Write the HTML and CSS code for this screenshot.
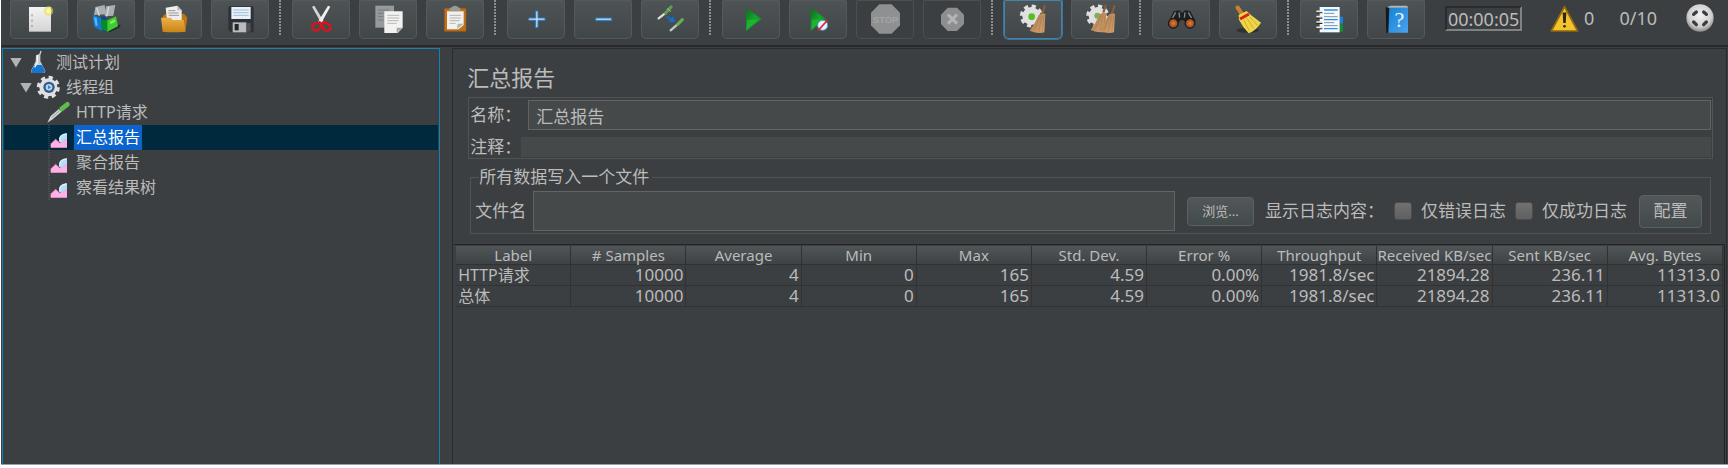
FILE: index.html
```html
<!DOCTYPE html>
<html lang="zh-CN">
<head>
<meta charset="utf-8">
<title>汇总报告</title>
<link rel="stylesheet" href="styles.css">
</head>
<body>
<svg class="defs" aria-hidden="true">
  <defs>
    <linearGradient id="paper" x1="0" y1="0" x2="0" y2="1"><stop offset="0" stop-color="#f4f4f4"/><stop offset="1" stop-color="#d4d4d4"/></linearGradient>
    <linearGradient id="folder" x1="0" y1="0" x2="0" y2="1"><stop offset="0" stop-color="#eeb04a"/><stop offset="1" stop-color="#c98416"/></linearGradient>
    <linearGradient id="blue" x1="0" y1="0" x2="1" y2="1"><stop offset="0" stop-color="#1583d8"/><stop offset="1" stop-color="#4aa3ec"/></linearGradient>
    <linearGradient id="green" x1="0" y1="0" x2="1" y2="1"><stop offset="0" stop-color="#0d6a1c"/><stop offset=".5" stop-color="#15a52b"/><stop offset="1" stop-color="#0b7a1c"/></linearGradient>
    <linearGradient id="wood" x1="0" y1="0" x2="1" y2="1"><stop offset="0" stop-color="#a97a4e"/><stop offset="1" stop-color="#d8a470"/></linearGradient>
    <radialGradient id="ball" cx=".5" cy=".4" r=".6"><stop offset="0" stop-color="#f2f2f2"/><stop offset=".7" stop-color="#cfcfcf"/><stop offset="1" stop-color="#8a8a8a"/></radialGradient>
    <radialGradient id="lens"><stop offset="0" stop-color="#d9814a"/><stop offset=".7" stop-color="#a4501f"/><stop offset="1" stop-color="#2a1a12"/></radialGradient>
    <g id="gear">
      <circle r="27" fill="#e0e0e0"/>
      <circle r="29" fill="none" stroke="#e0e0e0" stroke-width="11" stroke-dasharray="12.4 10.38"/>
    </g>
    <g id="broom">
      <path d="M0-44 6-42-2-18-8-20Z" fill="#8a5d38"/>
      <path d="M-16-14Q-6-22 4-17L1 38Q-18 44-43 33-27 12-16-14Z" fill="url(#wood)"/>
      <path d="M-12-10-30 32M-6-10-16 36M0-10-6 38" stroke="#8a6040" stroke-width="1" fill="none"/>
    </g>
    <symbol id="chart" viewBox="138 250 72 75">
      <path d="M147 250v75" stroke="#77797a" stroke-width="2" stroke-dasharray="3 3"/>
      <path d="M152 306 167 292 180 304 201 291V318H152Z" fill="#ffb0e4"/>
      <path d="M152 306 167 292 180 304 198 293" fill="none" stroke="#a83c78" stroke-width="2"/>
      <path d="M177 300Q172 278 201 274V292L184 304Z" fill="#b8dcf8"/>
      <path d="M180 297Q176 281 198 277" fill="none" stroke="#e8f6ff" stroke-width="3"/>
    </symbol>
  </defs>
</svg>

<div class="app">
  <header class="toolbar">
    <button class="tool" aria-label="新建"><svg viewBox="30 0 174 114">
      <path d="M87 18H153V92H87Z" fill="url(#paper)"/><path d="M96 40v6M96 56v6M96 72v6" stroke="#888" stroke-width="3"/>
      <circle cx="146" cy="30" r="14" fill="#e8d84a" opacity=".6"/><circle cx="146" cy="30" r="8" fill="#fff6a0"/></svg></button>
    <button class="tool" aria-label="模板"><svg viewBox="231 0 174 114">
      <path d="M322 84 362 70 358 80 328 94Z" fill="#252829"/>
      <path d="M286 18 314 12 318 40 282 42ZM318 16 346 12 340 44 314 46Z" fill="#a9b0b3"/><path d="M290 20 298 44M326 18 320 46" stroke="#d8dcde" stroke-width="4"/>
      <path d="M277 41 303 50 308 91 283 79Z" fill="#1478d0"/><path d="M303 50 314 44 320 58 316 92 308 91Z" fill="#0a4a94"/>
      <path d="M282 48 290 51 293 76 286 73Z" fill="#58b8f8"/>
      <path d="M303 55 322 58V92L305 84Z" fill="#0a8a24"/><path d="M322 58 348 46 354 76 322 92Z" fill="#3ccc30"/><path d="M330 62 344 55 346 62 331 70Z" fill="#82ee60"/></svg></button>
    <button class="tool" aria-label="打开"><svg viewBox="432 0 174 114">
      <path d="M488 46 496 38H552L562 50 556 90H492Z" fill="#b87714"/>
      <path d="M497 20 532 14 545 28V58H501Z" fill="#eeeeee"/><path d="M532 14V28H545Z" fill="#b8b8b8"/><path d="M505 29H526M505 36H536M506 43H537" stroke="#999" stroke-width="3"/>
      <path d="M483 50H512L518 57H551L557 92Q520 96 488 92Z" fill="url(#folder)"/></svg></button>
    <button class="tool" aria-label="保存"><svg viewBox="633 0 174 114">
      <path d="M685 20Q685 16 689 16H757Q761 16 761 20V94H692L685 87Z" fill="#303138"/>
      <path d="M694 18H752V54H694Z" fill="#e8f1f8"/><path d="M700 27H746M700 35H746M700 43H746" stroke="#9fbfd8" stroke-width="3"/>
      <path d="M698 64H739V94H698Z" fill="#b9bbbd"/><path d="M704 69H716V88H704Z" fill="#25262a"/><path d="M741 66H752V92H741Z" fill="#505159"/></svg></button>
    <span class="divider"></span>
    <button class="tool" aria-label="剪切"><svg viewBox="876 0 174 114">
      <path d="M936 17 943 14 972 62 962 64Z" fill="#d4d4d4"/><path d="M991 17 984 14 954 62 965 64Z" fill="#f0f0f0"/>
      <path d="M962 62Q957 66 946 67Q935 70 937 82Q942 92 953 88Q963 83 963 66M967 62Q971 66 982 67Q993 70 991 83Q986 92 976 88Q966 83 966 66" fill="none" stroke="#d8141c" stroke-width="7"/></svg></button>
    <button class="tool" aria-label="复制"><svg viewBox="1077 0 174 114">
      <path d="M1126 14H1182V80H1126Z" fill="#979a9c"/><path d="M1134 27H1168M1134 37H1150M1134 47H1150M1134 57H1150" stroke="#77797b" stroke-width="3"/>
      <path d="M1153 31H1208V80L1193 96H1153Z" fill="#f2f2f0"/><path d="M1208 80H1190V96Z" fill="#a9aaa8"/><path d="M1162 43H1198M1162 51H1198M1162 59H1196M1162 67H1190" stroke="#b8b8b6" stroke-width="3"/></svg></button>
    <button class="tool" aria-label="粘贴"><svg viewBox="-9 0 174 114">
      <path d="M46 22H111V91H46Z" fill="#bd701d" stroke="#9a5510" stroke-width="2"/><path d="M54 31H104V72L89 85H54Z" fill="#f1f1ee"/><path d="M104 68H86L84 85Z" fill="#b5b5b0"/>
      <path d="M62 43H96M62 51H96M62 59H92M62 67H80" stroke="#b4b4b2" stroke-width="3"/><path d="M62 22 70 17Q78 12 86 17L94 22V31H62Z" fill="#989a94"/></svg></button>
    <span class="divider"></span>
    <button class="tool" aria-label="展开"><svg viewBox="232 0 174 114"><path d="M318 30H325V51H346V58H325V80H318V58H297V51H318Z" fill="#b8dcf8" stroke="#2d78bd" stroke-width="3"/></svg></button>
    <button class="tool" aria-label="折叠"><svg viewBox="433 0 174 114"><path d="M498 51H546V59H498Z" fill="#a8d2f4" stroke="#2d78bd" stroke-width="3"/></svg></button>
    <button class="tool" aria-label="切换"><svg viewBox="634 0 174 114">
      <path d="M687 52 710 34" stroke="#dcdedc" stroke-width="7" stroke-linecap="round"/><path d="M708 36 724 18" stroke="#5d9d50" stroke-width="10" stroke-linecap="round"/><path d="M712 22 724 32" stroke="#90c880" stroke-width="3"/>
      <path d="M723 88 746 68" stroke="#c4c8c4" stroke-width="7" stroke-linecap="round"/><path d="M744 70 758 56" stroke="#6aac58" stroke-width="9" stroke-linecap="round"/>
      <path d="M711 44 724 52 730 46 736 63 717 62 721 57 710 48Z" fill="#0c70d8"/></svg></button>
    <span class="divider"></span>
    <button class="tool" aria-label="启动"><svg viewBox="877 0 174 114"><path d="M949 20 996 54 949 90Z" fill="url(#green)"/><path d="M952 56 990 55 952 84Z" fill="#28c835" opacity=".5"/></svg></button>
    <button class="tool" aria-label="不停顿启动"><svg viewBox="1078 0 174 114"><path d="M1143 20 1188 53 1143 90Z" fill="url(#green)"/><path d="M1146 56 1180 55 1146 84Z" fill="#28c835" opacity=".5"/>
      <circle cx="1179" cy="73" r="15" fill="#e6f2fb" stroke="#5697c8" stroke-width="3"/><path d="M1165 89 1194 57" stroke="#d82a30" stroke-width="5"/></svg></button>
    <button class="tool off" aria-label="停止" disabled><svg viewBox="51 0 174 114"><path d="M121 10H158L183 35V73L158 98H121L96 73V35Z" fill="#8f9091"/>
      <text class="stop" x="140" y="66" text-anchor="middle">STOP</text></svg></button>
    <button class="tool off" aria-label="关闭" disabled><svg viewBox="252 0 174 114"><path d="M326 20H354L375 41V69L354 90H326L306 69V41Z" fill="#8d8e8f"/><path d="M327 41 354 68M354 41 327 68" stroke="#b4b5b5" stroke-width="9"/></svg></button>
    <span class="divider"></span>
    <button class="tool focus" aria-label="清除"><svg viewBox="492 0 174 114">
      <use href="#gear" x="574" y="45"/><circle cx="575" cy="47" r="10" fill="#55bf20"/><use href="#broom" x="612" y="56"/></svg></button>
    <button class="tool" aria-label="清除全部"><svg viewBox="694 0 174 114">
      <use href="#gear" x="774" y="45"/><circle cx="773" cy="44" r="9" fill="#7fb058"/><use href="#broom" x="796" y="54"/><use href="#broom" x="822" y="56"/></svg></button>
    <span class="divider"></span>
    <button class="tool" aria-label="查找"><svg viewBox="939 0 174 114">
      <path d="M990 60 1004 31 1020 28 1029 36 1038 28 1054 31 1070 60 1050 78 1034 58H1024L1010 78Z" fill="#1d1e20"/>
      <path d="M1010 34 1000 52M1048 34 1058 52M1020 34 1022 50M1038 34 1036 50" stroke="#85888a" stroke-width="4"/>
      <circle cx="1003" cy="67" r="15" fill="url(#lens)" stroke="#17181a" stroke-width="3"/><circle cx="1053" cy="67" r="15" fill="url(#lens)" stroke="#17181a" stroke-width="3"/></svg></button>
    <button class="tool" aria-label="清除查找"><svg viewBox="1140 0 174 114">
      <ellipse cx="1226" cy="88" rx="34" ry="8" fill="#303334"/>
      <path d="M1196 20 1208 38" stroke="#c9822c" stroke-width="13" stroke-linecap="round"/>
      <path d="M1199 42 1223 30 1236 42 1266 65Q1252 88 1229 97Q1212 80 1200 56Z" fill="#f0d548"/>
      <path d="M1214 56 1230 88M1224 52 1244 82M1233 48 1256 74" stroke="#c09a18" stroke-width="2"/>
      <path d="M1203 54 1230 39" stroke="#d5241c" stroke-width="9"/></svg></button>
    <span class="divider"></span>
    <button class="tool" aria-label="函数助手"><svg viewBox="123 0 174 114">
      <path d="M182 18H242V94H182Z" fill="#f5f8fb"/><path d="M243 47H252V68H243Z" fill="#187ee0"/><path d="M243 70H252V92H243Z" fill="#128c2c"/>
      <path d="M195 27H236M195 56H236M195 83H236" stroke="#2a8eee" stroke-width="4"/><path d="M195 37H226M195 47H236M195 65H226M195 74H236" stroke="#7b94aa" stroke-width="3"/>
      <path d="M172 35H190M172 51H190M172 67H190M172 83H190" stroke="#202224" stroke-width="4"/><path d="M172 31H190M172 47H190M172 63H190M172 79H190" stroke="#e4e4e4" stroke-width="5"/></svg></button>
    <button class="tool" aria-label="帮助"><svg viewBox="324 0 174 114">
      <path d="M380 18 392 14V94L382 96Z" fill="#16181a"/><path d="M382 18 396 14H444L448 20H390Z" fill="#b4b8ba"/>
      <path d="M391 21H447V95H388Z" fill="url(#blue)"/><text class="help" x="421" y="78" text-anchor="middle">?</text></svg></button>
    <div class="status">
      <output class="timer">00:00:05</output>
      <svg class="warn" viewBox="870 14 86 80"><path d="M913 19 952 91H874Z" fill="#f4c22c" stroke="#8f6a10" stroke-width="5" stroke-linejoin="round"/><path d="M909 38H917L915 66H911Z" fill="#2c2512" stroke="#2c2512" stroke-width="3"/><circle cx="913" cy="77" r="4" fill="#2c2512"/></svg>
      <span class="errors">0</span>
      <span class="threads">0/10</span>
      <svg class="state" viewBox="1276 12 84 84"><circle cx="1318" cy="54" r="41" fill="url(#ball)"/>
        <g stroke="#3b3e40" stroke-width="10" stroke-linecap="round"><path d="M1299 43 1307 36M1329 36 1337 43M1299 66 1307 74M1329 74 1337 66"/></g></svg>
    </div>
  </header>

  <div class="split">
    <ul class="tree" role="tree">
      <li class="node" role="treeitem"><span class="arrow"></span><svg viewBox="78 32 72 75">
        <path d="M108 48 118 44 121 34 125 36 121 48V66L136 94Q136 101 128 101H100Q92 101 93 94L107 66Z" fill="#c6cbce"/><path d="M103 77H126L135 94Q135 101 128 101H100Q93 101 94 94Z" fill="#1676cf"/><path d="M112 48V70L104 84" fill="none" stroke="#f4f6f7" stroke-width="4"/></svg><span class="label">测试计划</span></li>
      <li class="node level-1" role="treeitem"><span class="arrow"></span><svg viewBox="108 105 72 75">
        <use href="#gear" x="145" y="142"/><circle cx="147" cy="142" r="17" fill="#2c5d92"/><circle cx="147" cy="142" r="10" fill="#b8d2e8"/><path d="M144 136 153 142 144 148Z" fill="#4c7cac"/></svg><span class="label">线程组</span></li>
      <li class="node level-2" role="treeitem"><svg viewBox="138 174 72 75">
        <path d="M142 242 152 222 180 198 188 206 158 232Z" fill="#d2d6d2"/><path d="M155 227 180 205" stroke="#7b817d" stroke-width="2"/><path d="M174 196 192 210" stroke="#2e5a2b" stroke-width="6"/><path d="M186 200 202 187" stroke="#5fba50" stroke-width="14" stroke-linecap="round"/></svg><span class="label">HTTP请求</span></li>
      <li class="node level-2 selected" role="treeitem" aria-selected="true"><svg><use href="#chart"/></svg><span class="label">汇总报告</span></li>
      <li class="node level-2" role="treeitem"><svg><use href="#chart"/></svg><span class="label">聚合报告</span></li>
      <li class="node level-2" role="treeitem"><svg><use href="#chart"/></svg><span class="label">察看结果树</span></li>
    </ul>

    <main class="panel">
      <h1 class="title">汇总报告</h1>
      <div class="info">
        <label class="caption" for="name">名称：</label><input class="field name" id="name" type="text" value="汇总报告">
        <label class="caption" for="comment">注释：</label><input class="field comment" id="comment" type="text">
      </div>
      <fieldset class="output">
        <legend>所有数据写入一个文件</legend>
        <div class="file-row">
          <label for="file">文件名</label>
          <input class="field file" id="file" type="text">
          <button class="push browse">浏览...</button>
          <span class="log">显示日志内容：</span>
          <label class="check"><input type="checkbox">仅错误日志</label>
          <label class="check"><input type="checkbox">仅成功日志</label>
          <button class="push config">配置</button>
        </div>
      </fieldset>
      <div class="results">
        <table>
          <thead><tr><th>Label</th><th># Samples</th><th>Average</th><th>Min</th><th>Max</th><th>Std. Dev.</th><th>Error %</th><th>Throughput</th><th>Received KB/sec</th><th>Sent KB/sec</th><th>Avg. Bytes</th></tr></thead>
          <tbody>
            <tr><td>HTTP请求</td><td>10000</td><td>4</td><td>0</td><td>165</td><td>4.59</td><td>0.00%</td><td>1981.8/sec</td><td>21894.28</td><td>236.11</td><td>11313.0</td></tr>
            <tr><td>总体</td><td>10000</td><td>4</td><td>0</td><td>165</td><td>4.59</td><td>0.00%</td><td>1981.8/sec</td><td>21894.28</td><td>236.11</td><td>11313.0</td></tr>
          </tbody>
        </table>
      </div>
    </main>
  </div>
</div>
</body>
</html>
```
FILE: styles.css
```css
* { box-sizing: border-box; }

body {
  margin: 0;
  padding: 0 0 3px 1px;
  min-height: 100vh;
  display: flex;
  background: #fff;
  color: #bbb;
  font: 17px/20px "Noto Sans", "Noto Sans CJK SC", sans-serif;
}

button, input { font: inherit; color: inherit; }

.defs { position: absolute; width: 0; height: 0; }

.app {
  flex: 1;
  min-width: 0;
  display: flex;
  flex-direction: column;
  background: #3c3f41;
  border-bottom: 1px solid #9b9d9e;
}

/* Toolbar */
.toolbar {
  display: flex;
  align-items: flex-start;
  gap: 9px;
  height: 47px;
  padding-left: 9px;
  border-bottom: 2px solid #28292b;
}

.tool {
  flex: none;
  width: 58px;
  height: 39px;
  padding: 0;
  border: 0;
  border-radius: 2px 2px 5px 5px;
  background: linear-gradient(#4e5355, #414749);
  box-shadow: inset 0 0 0 1px #55595a;
}

.tool svg { display: block; width: 58px; height: 38px; }
.tool.off { background: #3c3f41; box-shadow: inset 0 0 0 1px #4c4f50; }
.tool.focus { box-shadow: inset 0 0 0 1px #4583ab, 0 0 0 1px #3b739a; }

.stop { font: bold 28px "Liberation Sans", sans-serif; fill: #a5a6a6; }
.help { font: 66px "Liberation Serif", serif; fill: #e8f3fc; }

.divider {
  flex: none;
  width: 5px;
  height: 36px;
  background: repeating-linear-gradient(#8b8d8e 0 2px, transparent 2px 3px) 1px 0 / 2px 100% no-repeat;
}

.status {
  flex: 1;
  display: flex;
  align-items: center;
  justify-content: flex-end;
  height: 36px;
  padding-right: 14px;
  font-size: 18px;
}

.timer {
  width: 77px;
  height: 25px;
  line-height: 22px;
  text-align: center;
  border: 2px solid;
  border-color: #2a2c2e #7d8283 #7d8283 #2a2c2e;
}

.warn { width: 29px; height: 27px; margin: 0 5px 0 28px; }
.threads { margin: 0 29px 0 25px; }
.state { width: 28px; height: 28px; }

/* Split view */
.split {
  flex: 1;
  display: grid;
  grid-template-columns: minmax(200px, 25.4%) minmax(0, 1fr);
  gap: 12px;
  padding: 1px 1px 0;
}

.tree {
  margin: 0;
  padding: 1px 1px 0;
  list-style: none;
  border: solid #1581b4;
  border-width: 1px 1px 0;
  font-size: 16px;
}

.node { display: flex; align-items: center; gap: 4px; height: 25px; padding-left: 6px; }
.level-1 { padding-left: 16px; }
.level-2 { padding-left: 42px; }
.node svg { flex: none; width: 24px; height: 25px; }
.label { padding: 0 2px; line-height: 25px; }
.selected { background: #00293d; color: #fff; }
.selected .label { background: #0a64cc; }

.arrow {
  width: 12px;
  height: 10px;
  background: #b0b2b3;
  clip-path: polygon(0 0, 100% 0, 50% 100%);
}

/* Report panel */
.panel {
  display: flex;
  flex-direction: column;
  border: 1px solid #292b2d;
  border-bottom: 0;
}

.title { margin: 14px 14px 6px; font-size: 22px; line-height: 28px; font-weight: 400; }

.info {
  display: grid;
  grid-template-columns: auto minmax(0, 1fr);
  align-items: center;
  row-gap: 7px;
  margin: 0 13px 0 15px;
  padding: 2px 1px 1px;
  border: 1px solid #505455;
}

.field {
  width: 100%;
  min-width: 0;
  padding: 0 7px;
  outline: 0;
  border: 1px solid #646464;
  background: #45494a;
}

.name { height: 30px; margin-left: 7px; width: auto; }
.comment { height: 20px; border: 0; }

.output {
  min-width: 0;
  margin: 8px 15px 0 17px;
  padding: 4px 8px 2px 4px;
  border: 1px solid #505455;
}

.output legend { margin-left: 4px; padding: 0 3px 0 0; line-height: 20px; }

.file-row { display: flex; align-items: center; }
.file { flex: 1; height: 40px; margin: 0 12px 0 7px; }

.push {
  flex: none;
  padding: 0;
  border: 1px solid #5b6061;
  border-radius: 4px;
  background: linear-gradient(#52585a, #434a4b);
}

.browse { width: 67px; height: 29px; font-size: 13px; }
.config { width: 63px; height: 33px; margin-left: 3px; }
.log { margin: 0 10px 0 11px; }

.check { display: flex; align-items: center; gap: 9px; margin-right: 9px; }

.check input {
  appearance: none;
  width: 18px;
  height: 18px;
  margin: 0;
  border: 1px solid #4a4c4d;
  border-radius: 3px;
  background: linear-gradient(#717171, #606060);
}

.results {
  flex: 1;
  margin: 10px 1px 0 1px;
  padding: 1px 1px 0 2px;
  border: solid #222426;
  border-width: 1px 1px 0 0;
}

table { width: 100%; table-layout: fixed; border-collapse: separate; border-spacing: 0; }

th {
  height: 19px;
  padding: 0;
  font-size: 15px;
  line-height: 18px;
  font-weight: 400;
  white-space: nowrap;
  background: linear-gradient(#505557, #3e4244);
  border: solid #2f3234;
  border-width: 0 1px 1px 0;
}

td {
  height: 21px;
  padding: 0 2px;
  line-height: 20px;
  text-align: right;
  border: solid #303335;
  border-width: 0 1px 1px 0;
}

td:first-child { text-align: left; font-size: 16px; }
```
